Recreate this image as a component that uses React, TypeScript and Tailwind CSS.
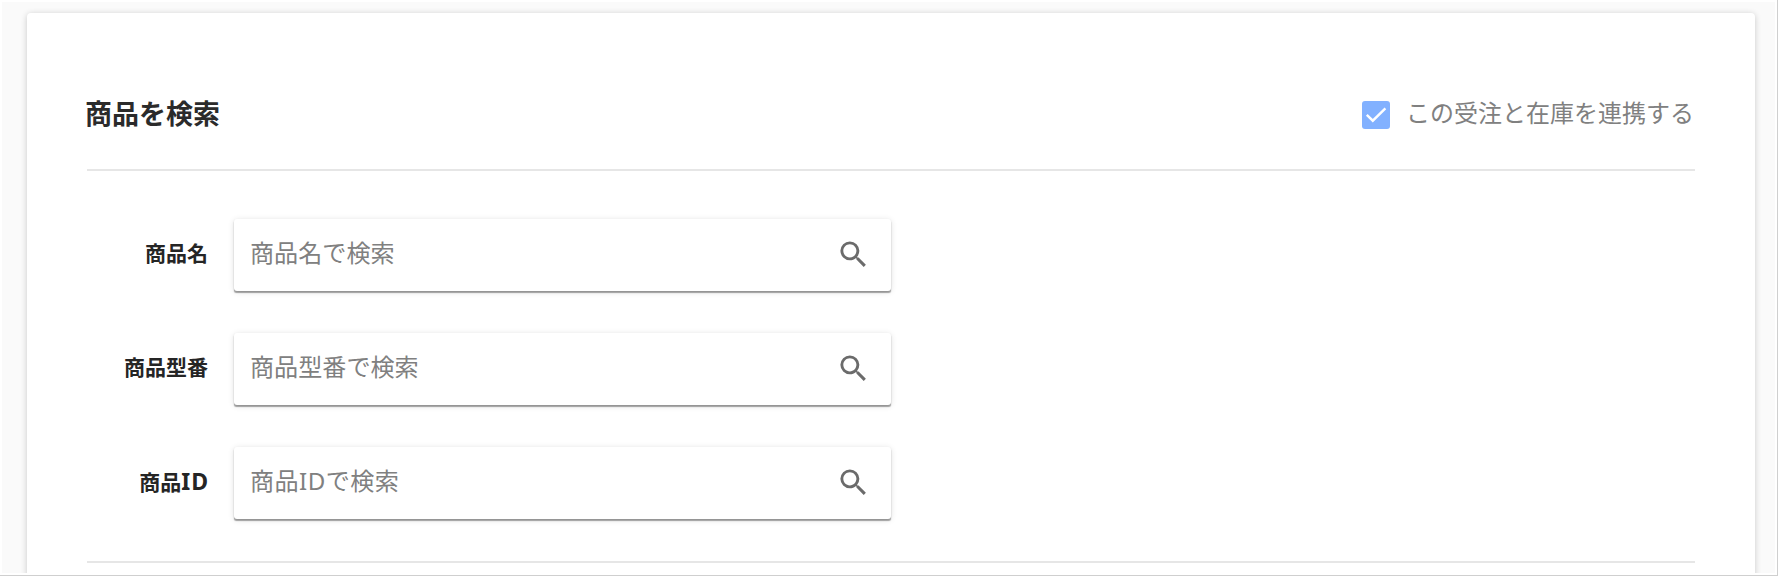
import React, { useState } from 'react';
import { MdSearch } from 'react-icons/md';

interface SearchField {
  id: string;
  label: React.ReactNode;
  placeholder: string;
  inputClass?: string;
}

const fields: SearchField[] = [
  { id: 'name', label: '商品名', placeholder: '商品名で検索' },
  { id: 'model', label: '商品型番', placeholder: '商品型番で検索' },
  {
    id: 'productId',
    label: <>商品<span className="text-[23px] tracking-[1px] -mr-px">ID</span></>,
    placeholder: '商品IDで検索',
    inputClass: 'tracking-[0.45px]',
  },
];

const SearchRow: React.FC<{ field: SearchField }> = ({ field }) => {
  const [value, setValue] = useState('');

  return (
    <div className="flex items-center">
      <label htmlFor={field.id} className="w-[121px] mr-[26px] mb-[3px] text-right text-[21px] leading-none font-bold text-[#252525]">
        {field.label}
      </label>
      <div className="w-[657px] h-[72px] flex items-center pl-4 pr-5 bg-white rounded-[3px] shadow-[0_2px_1px_-0.5px_rgba(0,0,0,0.32),0_1px_2px_rgba(0,0,0,0.1),0_1px_6px_rgba(0,0,0,0.12)]">
        <input
          id={field.id}
          type="text"
          value={value}
          placeholder={field.placeholder}
          onChange={(e) => setValue(e.target.value)}
          className={`flex-1 min-w-0 h-9 mb-1 text-[24.1px] text-[#333] placeholder:text-[#808080] placeholder:opacity-100 outline-none ${field.inputClass ?? ''}`}
        />
        <MdSearch className="size-[35px] mb-0.5 text-[#6b6b6b]" />
      </div>
    </div>
  );
};

const App: React.FC = () => {
  const [linked, setLinked] = useState(true);

  return (
    <div className="h-[576px] overflow-hidden border-r border-b border-[#cfcfcf] bg-white p-0.5 font-['Noto_Sans','Noto_Sans_CJK_JP',sans-serif]">
      <div className="h-full overflow-hidden bg-[#fafafa] pt-[11px] pl-[25px] pr-5">
        <section className="h-[600px] rounded-[4px] bg-white px-[60px] shadow-[0_1px_6px_rgba(0,0,0,0.2)]">
          <header className="h-[158px] pt-[46px] flex items-center justify-between border-b-2 border-[#e6e6e6]">
            <h1 className="-ml-0.5 text-[27px] leading-9 font-bold text-[#2b2b2b]">商品を検索</h1>
            <label className="flex items-center gap-4 pr-px text-2xl leading-9 text-[#808080]">
              <input
                type="checkbox"
                checked={linked}
                onChange={(e) => setLinked(e.target.checked)}
                className="sr-only"
              />
              <span className="size-7 mt-0.5 flex items-center justify-center rounded-[3px] bg-[#82b1ff]">
                {linked && (
                  <svg viewBox="0 0 28 28" className="size-7" fill="none" stroke="white" strokeWidth="2.4">
                    <path d="M4.8 13.8l6 5.9L23.4 7.3" />
                  </svg>
                )}
              </span>
              <span className="mb-0.5">この受注と在庫を連携する</span>
            </label>
          </header>

          <div className="flex flex-col gap-[42px] pt-12 pb-[42px] border-b-2 border-[#e6e6e6]">
            {fields.map((field) => (
              <SearchRow key={field.id} field={field} />
            ))}
          </div>
        </section>
      </div>
    </div>
  );
};

export default App;
